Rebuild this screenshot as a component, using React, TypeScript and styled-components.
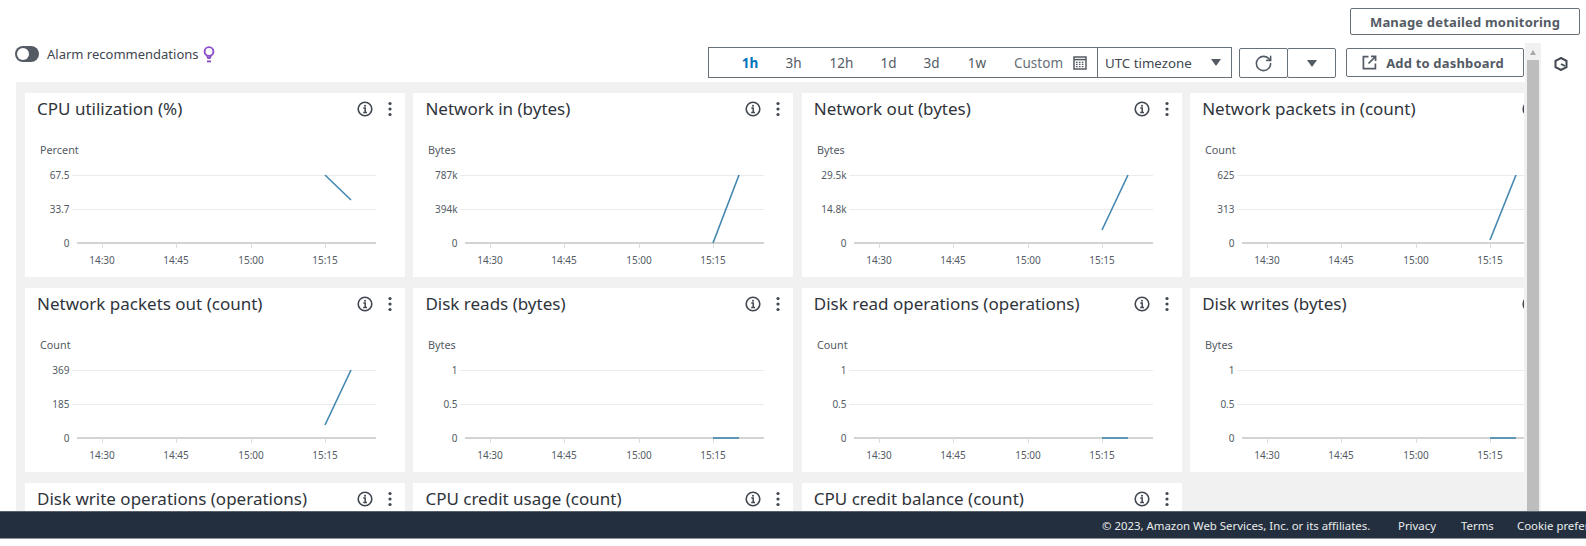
import React from "react";
import styled, { createGlobalStyle } from "styled-components";
import { RotateCw } from "lucide-react";

const Global = createGlobalStyle`
  html, body { margin: 0; padding: 0; background: #fff; }
  body { font-family: "Noto Sans", "Open Sans", sans-serif; color: #16191f; }
`;

const Page = styled.div`
  width: 1586px; height: 546px; overflow: hidden;
  display: flex; flex-direction: column; background: #fff;
`;
const ManageRow = styled.div`
  display: flex; justify-content: flex-end; flex: none; height: 43px; padding: 8px 6px 0 0; box-sizing: border-box;
`;
const OutlineButton = styled.button`
  font: 700 13px "Noto Sans", sans-serif; letter-spacing: .18px; color: #545b64;
  background: #fff; border: 1px solid #687078; border-radius: 2px; padding: 0; box-sizing: border-box;
  display: flex; align-items: center; justify-content: center; gap: 9px;
`;
const ManageButton = styled(OutlineButton)`
  width: 230px; height: 27px;
`;
const Body = styled.div`
  flex: none; height: 468px; display: flex; overflow: hidden;
`;
const Content = styled.div`
  width: 1525px; flex: none; display: flex; flex-direction: column; min-width: 0;
`;
const ControlRow = styled.div`
  display: flex; flex: none; height: 39px; align-items: flex-start; padding-right: 1px; box-sizing: border-box;
`;
const Alarm = styled.div`
  flex: 1; display: flex; align-items: center; gap: 8px; padding: 3px 0 0 15px;
  font-size: 13px; color: #414750; height: 16px;
`;
const Switch = styled.span`
  width: 24px; height: 16px; border-radius: 8px; background: #545b64; position: relative; flex: none;
  &::after { content: ""; position: absolute; left: 2px; top: 2px; width: 12px; height: 12px; border-radius: 50%; background: #fff; }
`;
const BulbSlot = styled.span`
  display: flex; margin-left: -4px;
`;
const RangeBox = styled.div`
  display: flex; width: 524px; height: 31px; margin-top: 4px; box-sizing: border-box; flex: none;
  border: 1px solid #687078; align-items: center; font-size: 13.5px; color: #545b64;
`;
const RangeItems = styled.div`
  width: 389px; flex: none; box-sizing: border-box; display: flex; align-items: center; height: 100%;
  padding-left: 21px; border-right: 1px solid #687078;
`;
const RangeItem = styled.span<{ $w: number; $active?: boolean }>`
  width: ${(p) => p.$w}px; text-align: center; flex: none;
  font-weight: ${(p) => (p.$active ? 700 : 400)}; color: ${(p) => (p.$active ? "#0073bb" : "#545b64")};
`;
const CustomLabel = styled.span`
  color: #687078; margin: 0 10px 0 12px;
`;
const Tz = styled.div`
  flex: 1; display: flex; align-items: center; justify-content: space-between;
  padding: 0 10px 0 7px; box-sizing: border-box; font-size: 13.3px; color: #414750;
`;
const Caret = styled.span`
  width: 0; height: 0; border-left: 5px solid transparent; border-right: 5px solid transparent;
  border-top: 7px solid #545b64; display: block;
`;
const IconButton = styled(OutlineButton)`
  width: 49px; height: 30px; margin-top: 5px; flex: none;
`;
const RefreshButton = styled(IconButton)`
  margin-left: 7px;
`;
const MenuButton = styled(IconButton)`
  margin-left: -1px;
`;
const AddButton = styled(OutlineButton)`
  width: 178px; height: 29px; margin: 5px 0 0 10px; flex: none; padding-right: 4px;
`;
const Panel = styled.div`
  flex: 1; margin-left: 16px; background: #f1f1f1; overflow: hidden;
  padding: 11px 1px 0 9px; min-height: 0;
`;
const Clip = styled.div`
  overflow: hidden; height: 100%;
`;
const Grid = styled.div`
  width: 1560px; display: grid; grid-template-columns: repeat(4, 380px); column-gap: 8.4px; row-gap: 11px;
  grid-auto-rows: 184px;
`;
const Card = styled.section`
  background: #fff; overflow: hidden;
`;
const CardHead = styled.header`
  display: flex; align-items: center; height: 32px; padding: 0 12px;
`;
const CardTitle = styled.h3`
  margin: -2px 0 0; font-size: 17px; font-weight: 400; color: #2f343b; flex: 1; white-space: nowrap;
`;
const CardTools = styled.div`
  display: flex; align-items: center; gap: 14px;
`;
const ChartSvg = styled.svg`
  display: block; font-family: "Noto Sans", sans-serif;
`;
const ScrollBar = styled.div`
  width: 16px; flex: none; background: #f1f1f1; position: relative; display: flex; flex-direction: column; padding: 0 2px;
  box-sizing: border-box;
`;
const ScrollArrow = styled.span`
  display: block; flex: none; margin: 7px auto 5px; width: 0; height: 0;
  border-left: 3.5px solid transparent; border-right: 3.5px solid transparent; border-bottom: 5px solid #a8a8a8;
`;
const ScrollThumb = styled.div`
  flex: 1; background: #bdbdbd;
`;
const Rail = styled.aside`
  flex: 1; padding: 11px 0 0 12px; color: #414750;
`;
const Footer = styled.footer`
  height: 28px; flex: none; background: #232f3e; border-top: 1px solid #59636e; border-bottom: 1px solid #8a939c; box-sizing: border-box;
  display: flex; align-items: center; color: #eaeded; font-size: 11.4px; padding-left: 1102px; white-space: nowrap; overflow: hidden;
`;
const FooterCopy = styled.span`
  width: 296px; flex: none;
`;
const FooterLink = styled.span<{ $w: number }>`
  width: ${(p) => p.$w}px; flex: none;
`;

const InfoIcon = () => (
  <svg width="16" height="16" viewBox="0 0 16 16" fill="none" stroke="#414750">
    <circle cx="8" cy="8" r="6.8" strokeWidth="1.6" />
    <path d="M6.3 7.1H8.2V11.2M6.2 11.4H10" strokeWidth="1.5" />
    <circle cx="8" cy="4.8" r="1" fill="#414750" stroke="none" />
  </svg>
);
const MoreIcon = () => (
  <svg width="6" height="16" viewBox="0 0 6 16" fill="#414750">
    <circle cx="3" cy="2.5" r="1.6" /><circle cx="3" cy="8" r="1.6" /><circle cx="3" cy="13.5" r="1.6" />
  </svg>
);
const Bulb = () => (
  <svg width="12" height="17" viewBox="0 0 12 17" fill="none" stroke="#8a4fc9" strokeWidth="1.9">
    <circle cx="6" cy="5.5" r="4.4" />
    <path d="M4 10 5.2 12H6.8L8 10" /><path d="M4 15.4H8" />
  </svg>
);
const Calendar = () => (
  <svg width="14" height="14" viewBox="0 0 14 14" fill="none" stroke="#545b64">
    <rect x="1" y="1" width="12" height="12" strokeWidth="1.5" />
    <path d="M1 3.6H13" strokeWidth="1.5" />
    <path d="M3 6.3H11M3 8.4H11M3 10.6H11" strokeWidth="1.2" strokeDasharray="1.6 1.3" />
  </svg>
);
const ExternalIcon = () => (
  <svg width="15" height="15" viewBox="0 0 15 15" fill="none" stroke="#545b64" strokeWidth="1.7">
    <path d="M6.5 1.6H1.4V13.6H13.4V8.5" />
    <path d="M9 1.4H13.6V6M13.4 1.6 6.5 8.5" />
  </svg>
);
const HexClock = () => (
  <svg width="16" height="14" viewBox="0 0 16 14" fill="none" stroke="currentColor" strokeWidth="2">
    <path d="M8 1 13.5 3.8V10.2L8 13 2.5 10.2V3.8Z" />
    <path d="M8 7 12 9" strokeWidth="1.6" />
  </svg>
);

type Chart = { title: string; unit: string; y: [string, string, string]; line: [number, number] };
const charts: Chart[] = [
  { title: "CPU utilization (%)", unit: "Percent", y: ["67.5", "33.7", "0"], line: [82, 107] },
  { title: "Network in (bytes)", unit: "Bytes", y: ["787k", "394k", "0"], line: [150, 82] },
  { title: "Network out (bytes)", unit: "Bytes", y: ["29.5k", "14.8k", "0"], line: [137, 82] },
  { title: "Network packets in (count)", unit: "Count", y: ["625", "313", "0"], line: [147, 82] },
  { title: "Network packets out (count)", unit: "Count", y: ["369", "185", "0"], line: [137, 82] },
  { title: "Disk reads (bytes)", unit: "Bytes", y: ["1", "0.5", "0"], line: [150, 150] },
  { title: "Disk read operations (operations)", unit: "Count", y: ["1", "0.5", "0"], line: [150, 150] },
  { title: "Disk writes (bytes)", unit: "Bytes", y: ["1", "0.5", "0"], line: [150, 150] },
  { title: "Disk write operations (operations)", unit: "Count", y: ["1", "0.5", "0"], line: [150, 150] },
  { title: "CPU credit usage (count)", unit: "Count", y: ["1", "0.5", "0"], line: [150, 150] },
  { title: "CPU credit balance (count)", unit: "Count", y: ["1", "0.5", "0"], line: [150, 150] },
];

const ticks: [number, string][] = [[77, "14:30"], [151, "14:45"], [226, "15:00"], [300, "15:15"]];
const Plot = ({ c }: { c: Chart }) => (
  <ChartSvg width="380" height="152" viewBox="0 32 380 152">
    <text x="15" y="61" fontSize="10.8" fill="#545b64">{c.unit}</text>
    {[82, 116].map((y) => <line key={y} x1="47" x2="351" y1={y + 0.5} y2={y + 0.5} stroke="#ebebeb" />)}
    <line x1="52" x2="351" y1="150" y2="150" stroke="#c4c4c4" strokeWidth="1.6" />
    {c.y.map((t, i) => (
      <text key={i} x={44.5} y={86 + i * 34} fontSize="10" textAnchor="end" fill="#545b64">{t}</text>
    ))}
    {ticks.map(([x, l]) => (
      <g key={l}>
        <line x1={x + 0.5} x2={x + 0.5} y1="150" y2="155" stroke="#dcdcdc" />
        <text x={x} y="171" fontSize="10" textAnchor="middle" fill="#545b64">{l}</text>
      </g>
    ))}
    <line x1="300" x2="326" y1={c.line[0]} y2={c.line[1]} stroke="#4387b0" strokeWidth="1.6" />
  </ChartSvg>
);

export default function App() {
  return (
    <Page>
      <Global />
      <ManageRow><ManageButton>Manage detailed monitoring</ManageButton></ManageRow>
      <Body>
        <Content>
          <ControlRow>
            <Alarm><Switch />Alarm recommendations<BulbSlot><Bulb /></BulbSlot></Alarm>
            <RangeBox>
              <RangeItems>
                <RangeItem $w={40} $active>1h</RangeItem>
                <RangeItem $w={47}>3h</RangeItem>
                <RangeItem $w={49}>12h</RangeItem>
                <RangeItem $w={45}>1d</RangeItem>
                <RangeItem $w={41}>3d</RangeItem>
                <RangeItem $w={50}>1w</RangeItem>
                <CustomLabel>Custom</CustomLabel>
                <Calendar />
              </RangeItems>
              <Tz>UTC timezone<Caret /></Tz>
            </RangeBox>
            <RefreshButton><RotateCw size={19} strokeWidth={2} /></RefreshButton>
            <MenuButton><Caret /></MenuButton>
            <AddButton><ExternalIcon />Add to dashboard</AddButton>
          </ControlRow>
          <Panel>
            <Clip>
              <Grid>
                {charts.map((c) => (
                  <Card key={c.title}>
                    <CardHead>
                      <CardTitle>{c.title}</CardTitle>
                      <CardTools><InfoIcon /><MoreIcon /></CardTools>
                    </CardHead>
                    <Plot c={c} />
                  </Card>
                ))}
              </Grid>
            </Clip>
          </Panel>
        </Content>
        <ScrollBar><ScrollArrow /><ScrollThumb /></ScrollBar>
        <Rail><HexClock /></Rail>
      </Body>
      <Footer>
        <FooterCopy>© 2023, Amazon Web Services, Inc. or its affiliates.</FooterCopy>
        <FooterLink $w={63}>Privacy</FooterLink>
        <FooterLink $w={56}>Terms</FooterLink>
        <FooterLink $w={120}>Cookie preferences</FooterLink>
      </Footer>
    </Page>
  );
}
